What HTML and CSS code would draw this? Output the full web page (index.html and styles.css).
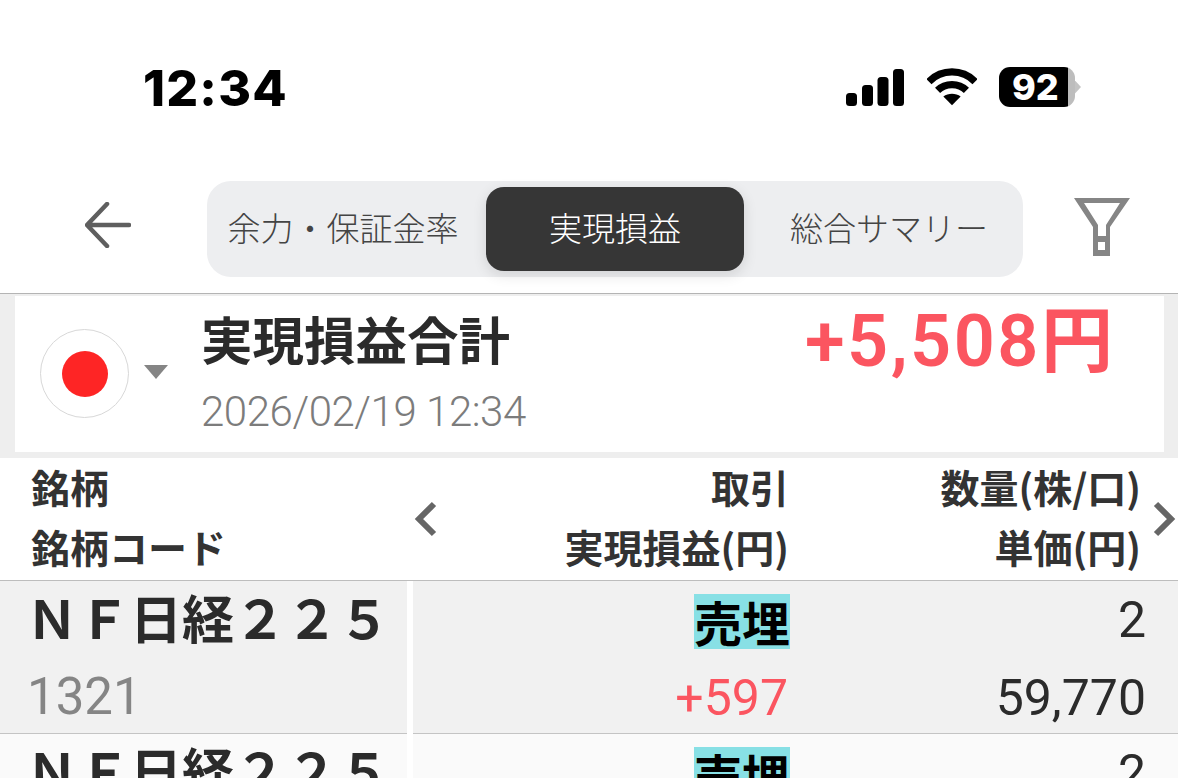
FILE: index.html
```html
<!DOCTYPE html>
<html lang="ja">
<head>
  <meta charset="UTF-8" />
  <meta name="viewport" content="width=device-width, initial-scale=1.0"/>
  <title>実現損益</title>
  <link rel="stylesheet" href="styles.css">
</head>
<body>

  <div class="status-bar">
    <span class="clock">12:34</span>
    <div class="status-icons">
      <svg class="signal" width="58" height="37" viewBox="0 0 58 37">
        <rect x="0" y="24" width="11" height="13" rx="3.5"/>
        <rect x="16" y="16" width="11" height="21" rx="3.5"/>
        <rect x="31.500" y="8" width="11" height="29" rx="3.5"/>
        <rect x="47" y="0" width="11" height="37" rx="3.5"/>
      </svg>
      <svg class="wifi" width="50" height="38" viewBox="0 0 52 38">
        <path d="M2 13.500 C15 0 37 0 50 13.500" fill="none" stroke="#000" stroke-width="7.500"/>
        <path d="M11 22.500 C19 14.500 33 14.500 41 22.500" fill="none" stroke="#000" stroke-width="7.500"/>
        <path d="M17 29 C22 25 30 25 35 29 L26 38 Z"/>
      </svg>
      <div class="battery">
        <div class="battery-body"><span>92</span></div>
        <div class="battery-cap"></div>
      </div>
    </div>
  </div>

  <div class="toolbar">
    <svg class="back" width="46" height="46" viewBox="0 0 46 46">
      <path d="M44 23 H3 M22 2 L2 23 L22 44" fill="none" stroke="#5f5f5f" stroke-width="4.500" stroke-linecap="round" stroke-linejoin="round"/>
    </svg>
    <div class="tabs">
      <div class="tab tab-first">余力・保証金率</div>
      <div class="tab tab-active">実現損益</div>
      <div class="tab tab-last">総合サマリー</div>
    </div>
    <svg class="filter" width="56" height="58" viewBox="0 0 56 58">
      <path fill-rule="evenodd" fill="#858585" d="M0 0 H56 L36 29 V58 H19 V29 Z M10 5 L24 27 V38 H32 V27 L46 5 Z M24 44 V52 H31 V44 Z"/>
    </svg>
  </div>

  <div class="summary">
    <div class="summary-card">
      <div class="flag"><span class="flag-dot"></span></div>
      <span class="caret"></span>
      <div class="summary-title">
        <div class="summary-name">実現損益合計</div>
        <div class="summary-date">2026/02/19 12:34</div>
      </div>
      <div class="summary-total"><span class="total-num">+5,508</span>円</div>
    </div>
  </div>

  <div class="table-head">
    <div class="head-name">
      <div>銘柄</div>
      <div>銘柄コード</div>
    </div>
    <svg class="chevron" width="26" height="36" viewBox="0 0 26 36">
      <path d="M21 3 L6 18 L21 33" fill="none" stroke="#666" stroke-width="6"/>
    </svg>
    <div class="head-trade">
      <div>取引</div>
      <div>実現損益(円)</div>
    </div>
    <div class="head-qty">
      <div>数量(株/口)</div>
      <div>単価(円)</div>
    </div>
    <svg class="chevron chevron-right" width="26" height="36" viewBox="0 0 26 36">
      <path d="M5 3 L20 18 L5 33" fill="none" stroke="#666" stroke-width="6"/>
    </svg>
  </div>

  <div class="row row-odd">
    <div class="cell-name">
      <div class="stock">ＮＦ日経２２５</div>
      <div class="code">1321</div>
    </div>
    <div class="cell-values">
      <div class="cell-trade">
        <div class="trade"><span class="tag">売埋</span></div>
        <div class="profit">+597</div>
      </div>
      <div class="cell-qty">
        <div class="qty">2</div>
        <div class="price">59,770</div>
      </div>
    </div>
  </div>

  <div class="row">
    <div class="cell-name">
      <div class="stock">ＮＦ日経２２５</div>
    </div>
    <div class="cell-values">
      <div class="cell-trade">
        <div class="trade"><span class="tag">売埋</span></div>
      </div>
      <div class="cell-qty">
        <div class="qty">2</div>
      </div>
    </div>
  </div>

</body>
</html>
```

FILE: styles.css
```css
* { margin: 0; padding: 0; box-sizing: border-box; }
html, body { height: 778px; overflow: hidden; }
body {
  background: #fff;
  color: #2b2b2b;
  font-family: Roboto, "Noto Sans CJK JP", sans-serif;
}

.status-bar {
  height: 181px;
  padding: 60px 97px 0 143px;
  display: flex;
  justify-content: space-between;
  align-items: flex-start;
}
.clock {
  font-family: Inter, Roboto, sans-serif;
  font-size: 50px;
  font-weight: 800;
  letter-spacing: 1.2px;
  line-height: 57px;
  color: #000;
}
.status-icons {
  display: flex;
  align-items: center;
  gap: 22px;
  margin-top: 7px;
  height: 40px;
}
.signal { margin-right: 1px; }
.battery { display: flex; align-items: center; }
.battery-body {
  width: 76px;
  height: 40px;
  border-radius: 11px;
  background: linear-gradient(to right, #000 91%, #bdbdbd 91%);
  color: #fff;
  font-family: Inter, Roboto, sans-serif;
  font-size: 36px;
  font-weight: 800;
  line-height: 40px;
  padding-left: 13px;
}
.battery-cap {
  width: 6px;
  height: 13px;
  background: #c4c4c4;
  clip-path: polygon(0 0, 100% 50%, 0 100%);
}

.toolbar {
  height: 113px;
  border-bottom: 1px solid #b4b4b4;
  display: flex;
  align-items: flex-start;
  padding-left: 85px;
}
.back { margin-top: 21px; }
.tabs {
  margin-left: 76px;
  width: 816px;
  height: 96px;
  background: #edeef0;
  border-radius: 24px;
  display: flex;
  align-items: center;
}
.tab {
  font-family: "Noto Sans CJK JP", sans-serif;
  font-size: 33px;
  font-weight: 300;
  line-height: 80px;
  padding-bottom: 4px;
  color: #444;
  text-align: center;
}
.tab-first { width: 279px; padding-right: 7px; }
.tab-active {
  width: 258px;
  height: 84px;
  background: #363636;
  color: #fff;
  border-radius: 18px;
  box-shadow: 0 4px 14px rgba(0,0,0,0.12);
}
.tab-last { width: 279px; padding-left: 11px; }
.filter { margin-left: 51px; margin-top: 17px; }

.summary {
  height: 164px;
  background: #eee;
  padding: 2px 14px 6px 15px;
}
.summary-card {
  height: 156px;
  background: #fff;
  display: flex;
  align-items: flex-start;
  padding-left: 25px;
}
.flag {
  width: 89px;
  height: 89px;
  margin-top: 33px;
  border: 1px solid #d8d8d8;
  border-radius: 50%;
  display: flex;
  align-items: center;
  justify-content: center;
}
.flag-dot {
  width: 46px;
  height: 46px;
  border-radius: 50%;
  background: #fe2525;
}
.caret {
  margin: 69px 0 0 15px;
  border-left: 12px solid transparent;
  border-right: 12px solid transparent;
  border-top: 14px solid #858585;
}
.summary-title { margin-left: 33px; }
.summary-name {
  font-family: "Noto Sans CJK JP", sans-serif;
  font-size: 51.5px;
  font-weight: 700;
  line-height: 60px;
  margin-top: 12px;
}
.summary-date {
  font-size: 42px;
  font-weight: 300;
  line-height: 50px;
  margin-top: 19px;
  color: #7c7c7c;
  letter-spacing: -0.45px;
}
.summary-total {
  margin-left: auto;
  margin-right: 51px;
  margin-top: 4px;
  font-size: 72px;
  font-weight: 700;
  line-height: 84px;
  color: #fb5560;
  white-space: nowrap;
}
.total-num { letter-spacing: 2.5px; font-weight: 600; }

.table-head {
  height: 123px;
  border-bottom: 1px solid #bdbdbd;
  display: flex;
  align-items: center;
  font-family: "Noto Sans CJK JP", sans-serif;
  font-size: 39px;
  font-weight: 700;
  line-height: 60px;
  color: #333;
}
.table-head > div { margin-top: -6px; }
.head-name { width: 413px; padding-left: 31px; }
.chevron { flex: none; }
.head-trade { width: 350px; text-align: right; }
.head-qty { width: 352px; text-align: right; }
.chevron-right { margin-left: 10px; }

.row {
  height: 153px;
  display: grid;
  grid-template-columns: 407px 765px;
  grid-template-rows: 153px;
  column-gap: 6px;
}
.cell-name, .cell-values {
  background: #fafafa;
  border-bottom: 1px solid #c4c4c4;
}
.row-odd .cell-name, .row-odd .cell-values { background: #f1f1f1; }
.cell-name { padding-left: 26px; }
.cell-values { display: flex; padding-right: 33px; }
.cell-trade { width: 377px; text-align: right; }
.cell-qty { width: 355px; text-align: right; }

.stock {
  font-family: "Noto Sans CJK JP", sans-serif;
  font-size: 52px;
  font-weight: 700;
  line-height: 72px;
  white-space: nowrap;
}
.code {
  height: 80px;
  padding-left: 1px;
  font-size: 51px;
  font-weight: 400;
  line-height: 88px;
  color: #858585;
}
.trade { height: 78px; padding-top: 13px; }
.tag {
  display: inline-block;
  height: 55px;
  background: #88e0e5;
  color: #000;
  font-family: "Noto Sans CJK JP", sans-serif;
  font-size: 48px;
  font-weight: 700;
  line-height: 55px;
}
.profit {
  height: 74px;
  font-size: 50px;
  font-weight: 400;
  line-height: 78px;
  color: #fb5560;
  padding-right: 2px;
}
.qty, .price {
  font-size: 50px;
  font-weight: 400;
  color: #2b2b2b;
  margin-right: -1px;
}
.qty { line-height: 78px; }
.price { height: 74px; line-height: 78px; }
```
